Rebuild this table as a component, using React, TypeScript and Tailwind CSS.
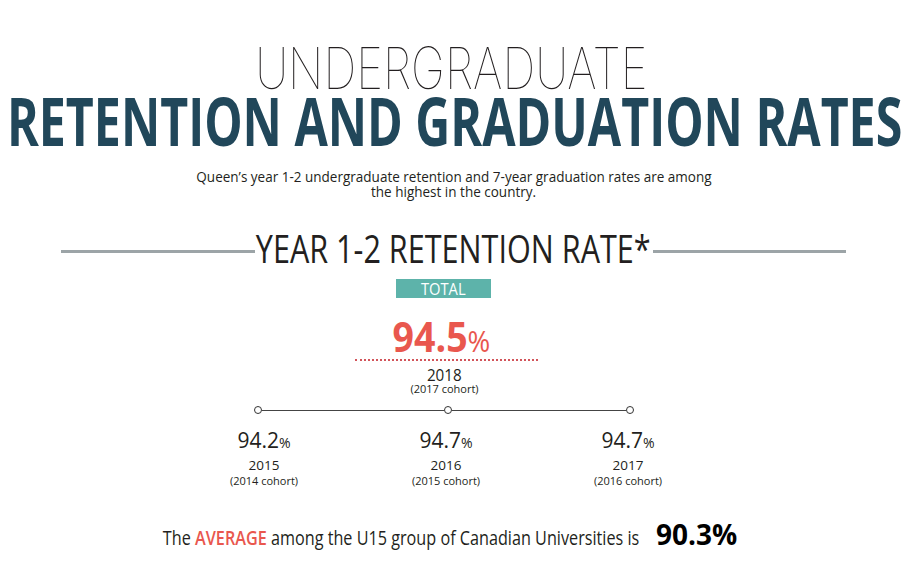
const sans = "font-['Open_Sans','Noto_Sans',sans-serif]"

function Stat({ value, year, cohort }: { value: string; year: string; cohort: string }) {
  return (
    <div className="flex w-[120px] flex-col items-center text-[#231f20]">
      <div className="mt-[20px] whitespace-nowrap leading-none">
        <span className="text-[21px]">{value}</span>
        <span className="text-[14px]">%</span>
      </div>
      <div className="mt-[8px] text-[13.5px] leading-none">{year}</div>
      <div className="mt-[2px] whitespace-nowrap text-[11px] leading-none">{cohort}</div>
    </div>
  )
}

export default function App() {
  return (
    <div className={`h-[568px] w-full overflow-hidden bg-white text-[#231f20] ${sans}`}>
      <h1 className="mt-[39px] flex justify-center pr-[8px] font-['Inter',sans-serif] text-[58px] font-thin leading-none">
        <span className="inline-block origin-center scale-x-[0.79] whitespace-nowrap">UNDERGRADUATE</span>
      </h1>
      <h2 className="-mt-[10px] flex justify-center pr-[2px] text-[66px] font-bold leading-none text-[#21475a]">
        <span className="inline-block origin-center scale-x-[0.732] whitespace-nowrap">
          RETENTION AND GRADUATION RATES
        </span>
      </h2>
      <p className="mt-[17px] flex flex-col items-center pr-[4px] text-[14px] leading-[14.5px]">
        <span className="inline-block origin-center scale-x-[0.965] whitespace-nowrap">
          Queen’s year 1-2 undergraduate retention and 7-year graduation rates are among
        </span>
        <span className="inline-block origin-center scale-x-[0.965] whitespace-nowrap">
          the highest in the country.
        </span>
      </p>

      <div className="mt-[30px] flex justify-center pr-[4px]">
        <div className="flex w-[785px] items-start">
          <div className="mt-[21px] h-[3px] flex-1 bg-[#9ca4a7]" />
          <div className="flex w-[398px] justify-center text-[38px] leading-none">
            <span className="inline-block origin-center scale-x-[0.805] whitespace-nowrap">
              YEAR 1-2 RETENTION RATE*
            </span>
          </div>
          <div className="mt-[21px] h-[3px] flex-1 bg-[#9ca4a7]" />
        </div>
      </div>

      <div className="mt-[12px] flex justify-center pr-[24px]">
        <div className="flex h-[19px] w-[95px] items-center justify-center bg-[#5db3aa] text-[16px] leading-none text-white">
          <span className="inline-block origin-center scale-x-[0.92]">TOTAL</span>
        </div>
      </div>

      <div className="mt-[18px] flex justify-center pr-[28px] leading-none text-[#e9574e]">
        <span className="inline-block origin-center scale-x-[0.915] whitespace-nowrap">
          <span className="text-[41px] font-bold">94.5</span>
          <span className="text-[30px]">%</span>
        </span>
      </div>
      <div className="mt-[2px] flex justify-center pr-[18px]">
        <div className="w-[183px] border-t-2 border-dotted border-[#d2545a]" />
      </div>
      <div className="mt-[6px] flex flex-col items-center pr-[22px]">
        <div className="text-[16px] leading-none">
          <span className="inline-block origin-center scale-x-[0.95]">2018</span>
        </div>
        <div className="whitespace-nowrap text-[11px] leading-none">(2017 cohort)</div>
      </div>

      <div className="mt-[12px] flex justify-center">
        <div className="mr-[24px] flex w-[380px] items-center">
          <div className="h-2 w-2 rounded-full border border-[#333] bg-white" />
          <div className="h-px w-[182px] bg-[#444]" />
          <div className="h-2 w-2 rounded-full border border-[#333] bg-white" />
          <div className="h-px w-[174px] bg-[#444]" />
          <div className="h-2 w-2 rounded-full border border-[#333] bg-white" />
        </div>
      </div>

      <div className="-mt-[4px] flex justify-center gap-[62px] pr-[19px]">
        <Stat value="94.2" year="2015" cohort="(2014 cohort)" />
        <Stat value="94.7" year="2016" cohort="(2015 cohort)" />
        <Stat value="94.7" year="2017" cohort="(2016 cohort)" />
      </div>

      <div className="mt-[34px] flex items-baseline justify-center pr-[12px] leading-none">
        <div className="flex w-[478px] justify-center text-[20px]">
          <span className="inline-block origin-center scale-x-[0.81] whitespace-nowrap">
            The <span className="font-semibold text-[#e9574e]">AVERAGE</span> among the U15 group of Canadian
            Universities is
          </span>
        </div>
        <span className="ml-[16px] text-[28px] font-bold text-black">90.3%</span>
      </div>
    </div>
  )
}
